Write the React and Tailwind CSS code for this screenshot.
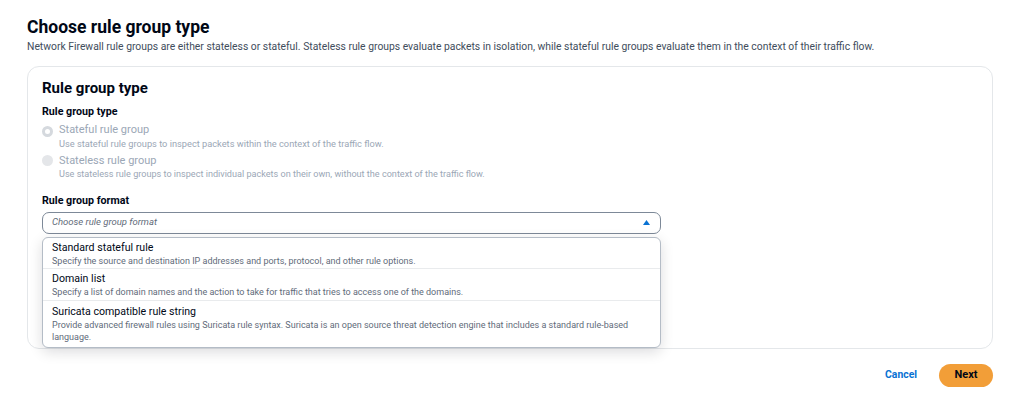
export default function App() {
  const font = { fontFamily: 'Roboto, "Noto Sans", Arial, sans-serif' };
  return (
    <div className="w-[1024px] h-[416px] bg-white text-[#000716] overflow-hidden" style={font}>
      <div className="pl-[27px] pr-[31px] pt-[15px]">
        <h1 className="text-[17.5px] leading-[24px] font-bold text-[#000716]">Choose rule group type</h1>
        <p className="text-[10.35px] leading-[14px] mt-[0.5px] text-[#414d5c] whitespace-nowrap">
          Network Firewall rule groups are either stateless or stateful. Stateless rule groups evaluate packets in isolation, while stateful rule groups evaluate them in the context of their traffic flow.
        </p>
        <div className="mt-[12px] border border-[#e4e7ea] rounded-[12px] h-[283.5px] pl-[14px] pr-[14px] pt-[11px] relative">
          <h2 className="text-[15px] leading-[20px] font-bold">Rule group type</h2>
          <div className="mt-[7px] text-[10.7px] leading-[14px] font-bold">Rule group type</div>
          <div className="mt-[4px] flex flex-col gap-[4px]">
            <div className="flex gap-[6px]">
              <div className="w-[11px] h-[11px] mt-[3.5px] rounded-full border-[3.5px] border-[#d5d9de] bg-white shrink-0"></div>
              <div>
                <div className="text-[11px] leading-[14px] text-[#9ba7b6]">Stateful rule group</div>
                <div className="text-[9.25px] leading-[13px] text-[#9ba7b6]">Use stateful rule groups to inspect packets within the context of the traffic flow.</div>
              </div>
            </div>
            <div className="flex gap-[6px]">
              <div className="w-[11px] h-[11px] mt-[1.5px] rounded-full bg-[#e4e6e9] shrink-0"></div>
              <div>
                <div className="text-[11px] leading-[14px] text-[#9ba7b6]">Stateless rule group</div>
                <div className="text-[9.1px] leading-[13px] text-[#9ba7b6]">Use stateless rule groups to inspect individual packets on their own, without the context of the traffic flow.</div>
              </div>
            </div>
          </div>
          <div className="mt-[13px] text-[10.7px] leading-[14px] font-bold">Rule group format</div>
          <div className="mt-[4px] w-[619px] h-[22px] border border-[#7d8998] rounded-[7px] flex items-center justify-between pl-[9px] pr-[10px]">
            <span className="italic text-[9.5px] text-[#5f6b7a]">Choose rule group format</span>
            <svg width="7" height="5" viewBox="0 0 7 5"><path d="M3.5 0 L7 5 L0 5 Z" fill="#0972d3" /></svg>
          </div>
          <div className="absolute left-[14px] top-[170px] w-[619px] bg-white border border-[#b4bcc6] rounded-[6px] shadow-[0_4px_14px_rgba(0,7,22,0.14)] overflow-hidden">
            <div className="h-[31.6px] pt-[3px] px-[9px] border-b border-[#e9ebed]">
              <div className="text-[10.6px] leading-[14px]">Standard stateful rule</div>
              <div className="text-[9px] leading-[12px] text-[#5f6b7a]">Specify the source and destination IP addresses and ports, protocol, and other rule options.</div>
            </div>
            <div className="h-[32px] pt-[3px] px-[9px] border-b border-[#e9ebed]">
              <div className="text-[10.6px] leading-[14px]">Domain list</div>
              <div className="text-[9px] leading-[12px] text-[#5f6b7a]">Specify a list of domain names and the action to take for traffic that tries to access one of the domains.</div>
            </div>
            <div className="px-[9px] pt-[3.5px] pb-[4.5px]">
              <div className="text-[10.6px] leading-[14px]">Suricata compatible rule string</div>
              <div className="text-[9px] leading-[12px] text-[#5f6b7a]">Provide advanced firewall rules using Suricata rule syntax. Suricata is an open source threat detection engine that includes a standard rule-based language.</div>
            </div>
          </div>
        </div>
        <div className="flex justify-end items-center gap-[22px] mt-[14.5px]">
          <button className="text-[10.4px] font-bold text-[#0972d3]">Cancel</button>
          <button className="h-[23px] w-[54px] rounded-full bg-[#f29e38] text-[11px] font-bold text-[#000716] flex items-center justify-center">Next</button>
        </div>
      </div>
    </div>
  );
}
